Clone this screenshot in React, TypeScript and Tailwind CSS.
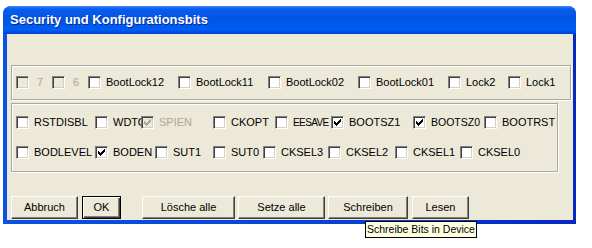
import React from "react";

// Dialog "Security und Konfigurationsbits" im Windows-XP-Stil

type Bit = { label: string; w: string; checked?: boolean; disabled?: boolean; gap?: string; text?: string };

const lockBits: Bit[] = [
  { label: "7", w: "w-[36px]", disabled: true, gap: "ml-[8px]" },
  { label: "6", w: "w-[36px]", disabled: true, gap: "ml-[8px]" },
  { label: "BootLock12", w: "w-[90px]" },
  { label: "BootLock11", w: "w-[90px]" },
  { label: "BootLock02", w: "w-[90px]" },
  { label: "BootLock01", w: "w-[90px]" },
  { label: "Lock2", w: "w-[60px]" },
  { label: "Lock1", w: "w-[60px]" },
];

const fuseHigh: Bit[] = [
  { label: "RSTDISBL", w: "w-[79px]" },
  { label: "WDTON", w: "w-[46px]" },
  { label: "SPIEN", w: "w-[72px]", checked: true, disabled: true },
  { label: "CKOPT", w: "w-[62px]" },
  { label: "EESAVE", w: "w-[56px]", text: "text-[10px] tracking-[-0.6px]" },
  { label: "BOOTSZ1", w: "w-[82px]", checked: true },
  { label: "BOOTSZ0", w: "w-[71px]", checked: true, text: "text-[10.5px]" },
  { label: "BOOTRST", w: "w-[70px]" },
];

const fuseLow: Bit[] = [
  { label: "BODLEVEL", w: "w-[79px]" },
  { label: "BODEN", w: "w-[60px]", checked: true },
  { label: "SUT1", w: "w-[58px]" },
  { label: "SUT0", w: "w-[50px]" },
  { label: "CKSEL3", w: "w-[65px]" },
  { label: "CKSEL2", w: "w-[67px]" },
  { label: "CKSEL1", w: "w-[65px]" },
  { label: "CKSEL0", w: "w-[70px]" },
];

const CheckMark = ({ color }: { color: string }) => (
  <svg width="7" height="7" viewBox="0 0 7 7" shapeRendering="crispEdges" className="absolute left-[2px] top-[2px]">
    <rect x="0" y="2" width="1" height="3" fill={color} />
    <rect x="1" y="3" width="1" height="3" fill={color} />
    <rect x="2" y="4" width="1" height="3" fill={color} />
    <rect x="3" y="3" width="1" height="3" fill={color} />
    <rect x="4" y="2" width="1" height="3" fill={color} />
    <rect x="5" y="1" width="1" height="3" fill={color} />
    <rect x="6" y="0" width="1" height="3" fill={color} />
  </svg>
);

const CheckItem = ({ bit }: { bit: Bit }) => (
  <div className={`${bit.w} shrink-0 flex items-center h-[13px]`}>
    <span
      className={`relative z-10 shrink-0 w-[13px] h-[13px] border border-t-[#808080] border-l-[#808080] border-b-white border-r-white shadow-[inset_1px_1px_0_#404040,inset_-1px_-1px_0_#d4d0c8] ${
        bit.disabled ? "bg-[#ece9d8]" : "bg-white"
      }`}
    >
      {bit.checked && <CheckMark color={bit.disabled ? "#aca899" : "#000000"} />}
    </span>
    <span
      className={`${bit.gap ?? "ml-[5px]"} ${bit.text ?? ""} whitespace-nowrap leading-[13px] ${
        bit.disabled ? "text-[#aca899]" : "text-black"
      }`}
    >
      {bit.label}
    </span>
  </div>
);

const Button = ({ label, w, isDefault }: { label: string; w: string; isDefault?: boolean }) => (
  <button
    type="button"
    className={`${w} h-[23px] shrink-0 flex items-center justify-center bg-[#ece9d8] text-[11px] text-black ${
      isDefault
        ? "border border-black shadow-[inset_1px_1px_0_#ffffff,inset_-1px_-1px_0_#404040,inset_-2px_-2px_0_#808080]"
        : "border border-t-white border-l-white border-b-[#404040] border-r-[#404040] shadow-[inset_-1px_-1px_0_#808080]"
    }`}
  >
    {label}
  </button>
);

export default function App() {
  return (
    <div className="relative w-[592px] h-[248px] bg-white pl-[3px] pt-[6px] font-['Liberation_Sans',Arial,sans-serif] text-[11px] text-black">
      <div className="w-[573px] h-[218px] flex flex-col rounded-t-[8px] overflow-hidden bg-[linear-gradient(to_right,#0a52e0,#0a45d8_50%,#0528c0)]">
        <div className="h-[28px] shrink-0 flex items-center pl-[7px] pb-[1px] bg-[linear-gradient(to_bottom,#3d8af7_0px,#0a5cf0_3px,#0054e3_45%,#005ef5_85%,#0040d0_100%)] text-white font-bold text-[13px] [text-shadow:1px_1px_#0a2a90]">
          Security und Konfigurationsbits
        </div>
        <div className="flex-1 ml-[4px] mr-[3px] mb-[4px] bg-[#ece9d8] pl-[4px] pt-[31px] flex flex-col">
          <div className="w-[560px] h-[35px] shrink-0 border border-[#aca899] shadow-[inset_1px_1px_0_#ffffff,1px_1px_0_#ffffff] flex items-center pl-[4px]">
            {lockBits.map((b) => (
              <CheckItem key={b.label} bit={b} />
            ))}
          </div>
          <div className="mt-[3px] w-[547px] h-[69px] shrink-0 border border-[#aca899] shadow-[inset_1px_1px_0_#ffffff,1px_1px_0_#ffffff] flex flex-col pl-[4px] pt-[12px] gap-[17px]">
            <div className="flex">
              {fuseHigh.map((b) => (
                <CheckItem key={b.label} bit={b} />
              ))}
            </div>
            <div className="flex">
              {fuseLow.map((b) => (
                <CheckItem key={b.label} bit={b} />
              ))}
            </div>
          </div>
          <div className="mt-[24px] flex">
            <Button label="Abbruch" w="w-[67px]" />
            <div className="ml-[4px]">
              <Button label="OK" w="w-[39px]" isDefault />
            </div>
            <div className="ml-[21px] flex gap-[3px]">
              <Button label="Lösche alle" w="w-[93px]" />
              <Button label="Setze alle" w="w-[87px]" />
              <Button label="Schreiben" w="w-[80px]" />
              <div className="ml-[1px]">
                <Button label="Lesen" w="w-[57px]" />
              </div>
            </div>
          </div>
        </div>
      </div>
      <div className="absolute left-[365px] top-[221px] h-[17px] px-[1px] border border-black bg-[#ffffe1] text-[10.5px] leading-[15px] whitespace-nowrap">
        Schreibe Bits in Device
      </div>
    </div>
  );
}
